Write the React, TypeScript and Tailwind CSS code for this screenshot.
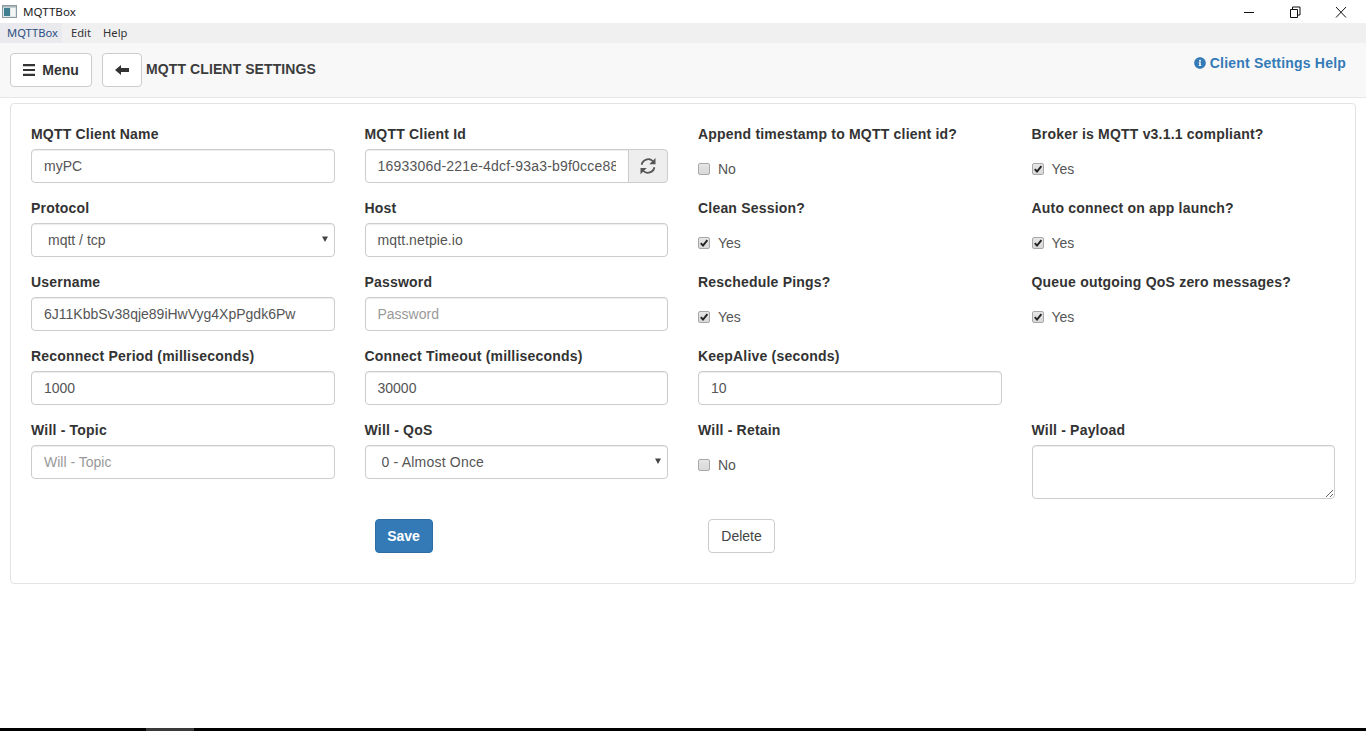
import React from "react";
import { FaInfoCircle } from "react-icons/fa";

const font = "font-['Liberation_Sans',Arial,sans-serif]";
const inputCls =
  "block w-full h-[34px] px-3 text-[14px] text-[#555] bg-white border border-[#ccc] rounded-[4px] shadow-[inset_0_1px_1px_rgba(0,0,0,0.075)] outline-none placeholder:text-[#999]";

function Label({ children }: { children: React.ReactNode }) {
  return <label className="block h-5 mb-[5px] text-[14px] leading-5 font-bold tracking-[0.2px] text-[#333] whitespace-nowrap">{children}</label>;
}

function Field({ label, value, placeholder, extra = "" }: { label: string; value?: string; placeholder?: string; extra?: string }) {
  return (
    <div className="h-[74px]">
      <Label>{label}</Label>
      <input className={`${inputCls} ${extra}`} defaultValue={value} placeholder={placeholder} />
    </div>
  );
}

function SelectField({ label, value, pad }: { label: string; value: string; pad: string }) {
  return (
    <div className="h-[74px]">
      <Label>{label}</Label>
      <div className="relative">
        <select className={`${inputCls} appearance-none ${pad}`} defaultValue={value}>
          <option>{value}</option>
        </select>
        <svg className="absolute right-[7px] top-[13px]" width="6" height="6" viewBox="0 0 6 6">
          <path d="M0 .5h6L3 6z" fill="#444" />
        </svg>
      </div>
    </div>
  );
}

function Check({ label, checked }: { label: string; checked?: boolean }) {
  return (
    <div className="flex items-center h-3 mt-[19px]">
      <span className="relative flex items-center justify-center w-3 h-3 rounded-[2px] border border-[#a8a8a8] bg-gradient-to-b from-[#e6e6e6] to-[#d8d8d8]">
        {checked && (
          <svg width="10" height="10" viewBox="0 0 10 10" className="absolute">
            <path d="M1.8 5.2 4 7.6 8.4 2.2" fill="none" stroke="#222" strokeWidth="1.9" />
          </svg>
        )}
      </span>
      <span className="ml-2 text-[14px] leading-5 text-[#555]">{label}</span>
    </div>
  );
}

function CheckField({ label, option, checked }: { label: string; option: string; checked?: boolean }) {
  return (
    <div className="h-[74px]">
      <Label>{label}</Label>
      <Check label={option} checked={checked} />
    </div>
  );
}

export default function App() {
  return (
    <div className={`flex flex-col h-[731px] bg-white overflow-hidden ${font}`}>
      {/* title bar */}
      <div className="flex items-center h-[23px] shrink-0 font-['Noto_Sans',sans-serif] text-[11.6px] text-[#222]">
        <svg className="ml-[2px]" width="15" height="13" viewBox="0 0 15 13">
          <rect x="0.5" y="0.5" width="14" height="12" fill="#dfe6e8" stroke="#8a9aa0" />
          <rect x="2" y="3" width="6" height="8" fill="#3f7f8f" />
          <rect x="9" y="3" width="4" height="8" fill="#f4f6f6" />
          <rect x="1" y="1" width="13" height="1.5" fill="#aab8bd" />
        </svg>
        <span className="ml-[6px]">MQTTBox</span>
        <div className="ml-auto flex items-center">
          <svg width="46" height="20" viewBox="0 0 46 20" className="block">
            <path d="M18 10.5h10" stroke="#111" />
          </svg>
          <svg width="46" height="20" viewBox="0 0 46 20" className="block">
            <path d="M18.5 7.5h7v8h-7zM20.5 7.5v-2.5h7.5v8h-2.5" fill="none" stroke="#111" />
          </svg>
          <svg width="46" height="20" viewBox="0 0 46 20" className="block mr-[2px]">
            <path d="M18 5l10 10.5M28 5 18 15.5" fill="none" stroke="#111" />
          </svg>
        </div>
      </div>

      {/* menu bar */}
      <div className="flex items-center h-5 shrink-0 bg-[#f0f0f0] font-['Noto_Sans',sans-serif] text-[11.2px] text-[#333]">
        <span className="flex items-center h-full w-[62px] pl-[7px] bg-[#e9e9ee] text-[#2d4f80]">MQTTBox</span>
        <span className="ml-[9px]">Edit</span>
        <span className="ml-3">Help</span>
      </div>

      {/* navbar */}
      <div className="flex shrink-0 h-[55px] pl-[10px] pr-5 bg-[#f8f8f8] border-b border-[#e7e7e7]">
        <button className="flex items-center justify-center w-[82px] h-[34px] mt-[10px] bg-white border border-[#ccc] rounded-[4px] text-[14px] font-bold text-[#333]">
          <svg width="12" height="12" viewBox="0 0 12 12" className="mr-[7px]">
            <path d="M0 0h12v2.2H0zM0 4.9h12v2.2H0zM0 9.8h12V12H0z" fill="#333" />
          </svg>
          Menu
        </button>
        <button className="flex items-center justify-center w-10 h-[34px] mt-[10px] ml-[10px] bg-white border border-[#ccc] rounded-[4px]">
          <svg width="14" height="10" viewBox="0 0 14 10">
            <path d="M0 5 6 0v3h8v4H6v3z" fill="#333" />
          </svg>
        </button>
        <div className="ml-1 mt-4 h-5 text-[14px] leading-5 font-bold tracking-[0.1px] text-[#3c3c3c]">MQTT CLIENT SETTINGS</div>
        <a className="ml-auto mt-[10px] h-5 flex items-center text-[14px] font-bold tracking-[0.2px] text-[#337ab7]">
          <FaInfoCircle className="w-3 h-3 mr-1" />
          Client Settings Help
        </a>
      </div>

      {/* panel */}
      <div className="mx-[10px] mt-[5px] h-[481px] shrink-0 px-5 pt-5 border border-[#e3e3e3] rounded-[4px] bg-white">
        <div className="grid grid-cols-4 gap-x-[30px]">
          <Field label="MQTT Client Name" value="myPC" />
          <div className="h-[74px]">
            <Label>MQTT Client Id</Label>
            <div className="flex">
              <input className={`${inputCls} min-w-0 flex-1 rounded-r-none tracking-[0.2px]`} defaultValue="1693306d-221e-4dcf-93a3-b9f0cce88a1e" />
              <span className="flex items-center justify-center w-10 shrink-0 h-[34px] -ml-px bg-[#eee] border border-[#ccc] rounded-r-[4px]">
                <svg width="20" height="20" viewBox="0 0 16 16">
                  <path d="M2.9 7A5.3 5.3 0 0 1 11.9 4.2M13.1 9A5.3 5.3 0 0 1 4.1 11.8" fill="none" stroke="#555" strokeWidth="1.4" />
                  <path d="M14 1.5v5H9zM2 14.5v-5h5z" fill="#555" />
                </svg>
              </span>
            </div>
          </div>
          <CheckField label="Append timestamp to MQTT client id?" option="No" />
          <CheckField label="Broker is MQTT v3.1.1 compliant?" option="Yes" checked />

          <SelectField label="Protocol" value="mqtt / tcp" pad="pl-4" />
          <Field label="Host" value="mqtt.netpie.io" extra="tracking-[0.1px]" />
          <CheckField label="Clean Session?" option="Yes" checked />
          <CheckField label="Auto connect on app launch?" option="Yes" checked />

          <Field label="Username" value="6J11KbbSv38qje89iHwVyg4XpPgdk6Pw" />
          <Field label="Password" placeholder="Password" />
          <CheckField label="Reschedule Pings?" option="Yes" checked />
          <CheckField label="Queue outgoing QoS zero messages?" option="Yes" checked />

          <Field label="Reconnect Period (milliseconds)" value="1000" />
          <Field label="Connect Timeout (milliseconds)" value="30000" />
          <Field label="KeepAlive (seconds)" value="10" />
          <div />

          <Field label="Will - Topic" placeholder="Will - Topic" />
          <SelectField label="Will - QoS" value="0 - Almost Once" pad="pl-4 tracking-[0.2px]" />
          <CheckField label="Will - Retain" option="No" />
          <div className="h-[99px]">
            <Label>Will - Payload</Label>
            <textarea className={`${inputCls} !h-[54px] py-[6px]`} />
          </div>

          <div />
          <div>
            <button className="ml-[10px] w-[58px] h-[34px] bg-[#337ab7] border border-[#2e6da4] rounded-[4px] text-[14px] font-bold text-white">Save</button>
          </div>
          <div>
            <button className="ml-[10px] w-[67px] h-[34px] bg-white border border-[#ccc] rounded-[4px] text-[14px] text-[#444]">Delete</button>
          </div>
          <div />
        </div>
      </div>

      {/* bottom strip */}
      <div className="mt-auto flex h-[3px] shrink-0 bg-black">
        <div className="ml-[146px] w-12 bg-[#3a3a3a]" />
      </div>
    </div>
  );
}
